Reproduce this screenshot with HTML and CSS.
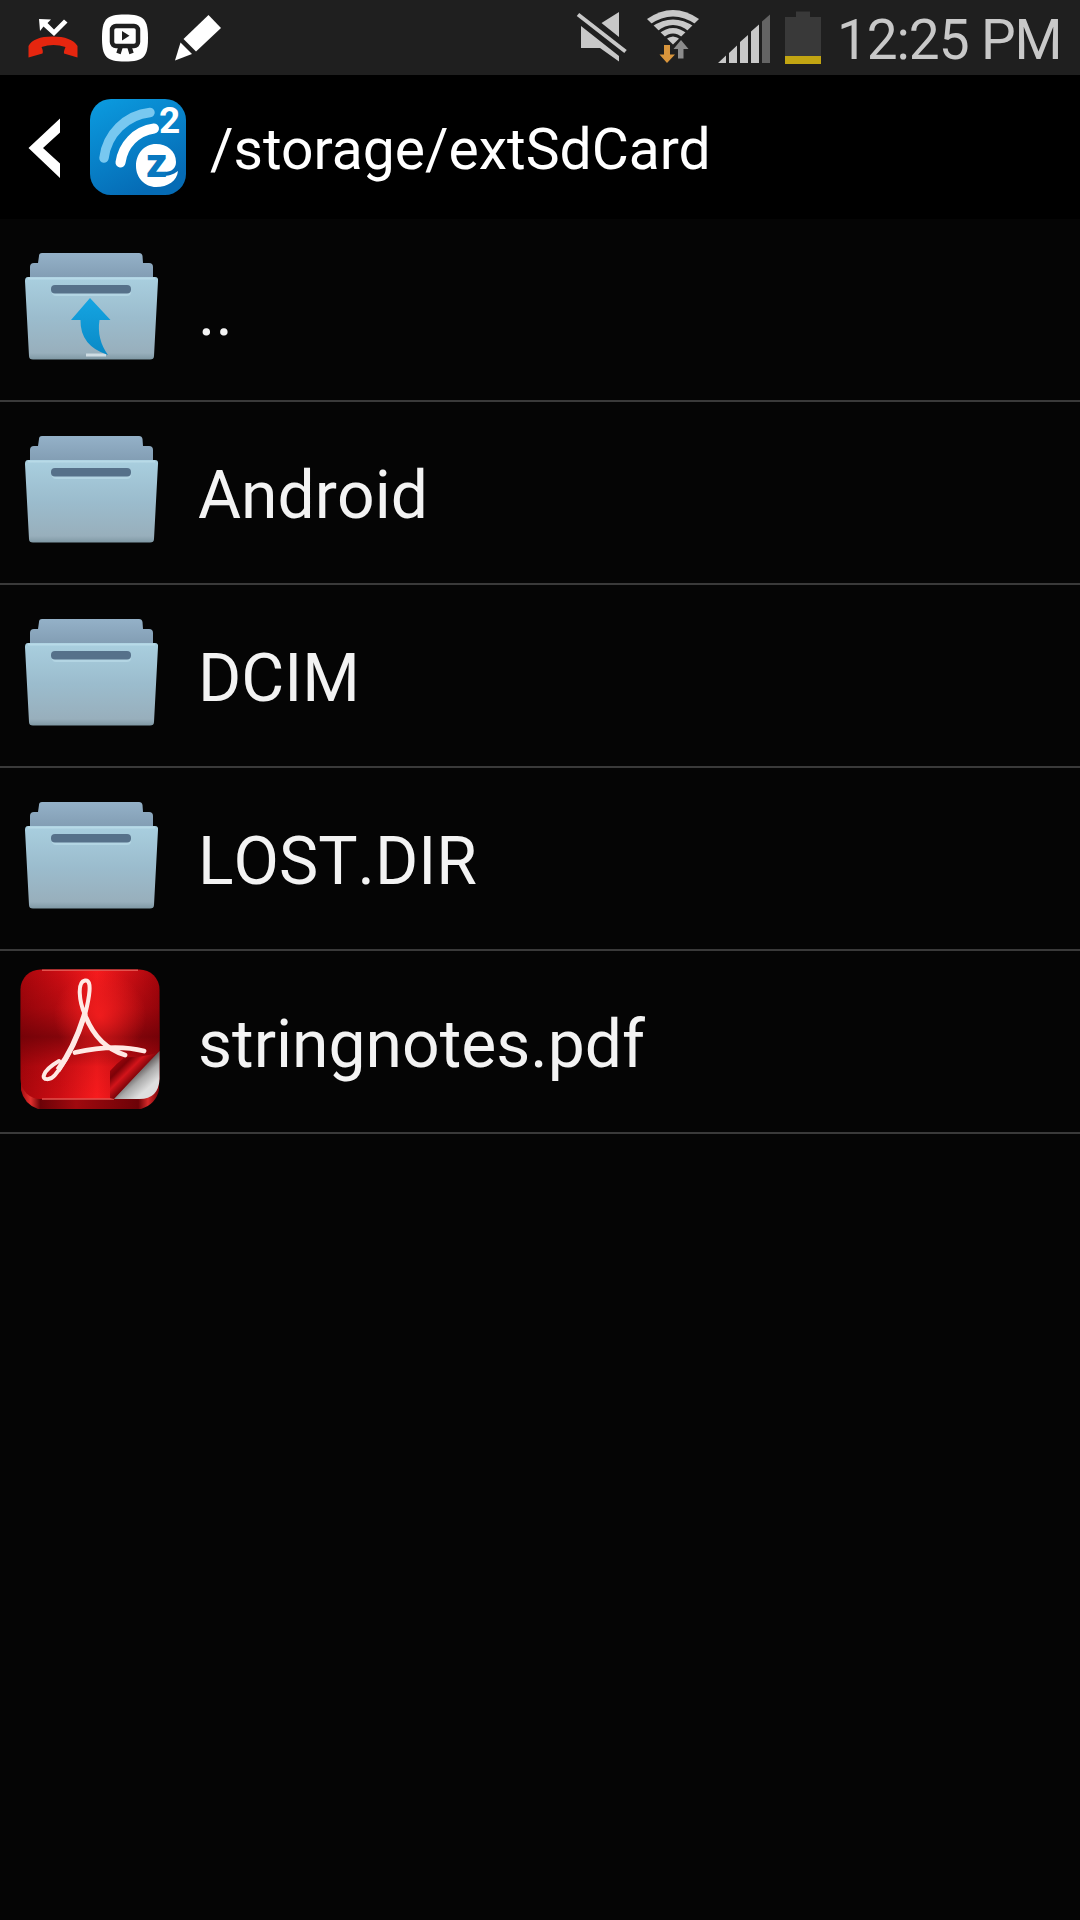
FILE: index.html
```html
<!DOCTYPE html>
<html lang="en">
<head>
    <meta charset="UTF-8">
    <meta name="viewport" content="width=device-width, initial-scale=1.0">
    <title>File Browser</title>
    <link rel="stylesheet" href="styles.css">
</head>
<body>

<!-- Shared gradients and the folder shape -->
<svg class="defs" width="0" height="0">
    <defs>
        <linearGradient id="folderBack" x1="0" y1="0" x2="0" y2="1">
            <stop offset="0" stop-color="#94b1c8"/>
            <stop offset="1" stop-color="#809bb1"/>
        </linearGradient>
        <linearGradient id="folderFront" x1="0" y1="0" x2="0" y2="1">
            <stop offset="0" stop-color="#a9cfdf"/>
            <stop offset="0.5" stop-color="#9bbccd"/>
            <stop offset="0.92" stop-color="#98afbc"/>
            <stop offset="1" stop-color="#7f98a4"/>
        </linearGradient>
        <linearGradient id="arrow" x1="0" y1="0" x2="0" y2="1">
            <stop offset="0" stop-color="#15a5e2"/>
            <stop offset="1" stop-color="#0989c6"/>
        </linearGradient>
        <linearGradient id="logoBg" x1="0" y1="0" x2="0.5" y2="1">
            <stop offset="0" stop-color="#0b9ce0"/>
            <stop offset="1" stop-color="#056bb5"/>
        </linearGradient>
        <linearGradient id="pdfBg" x1="0" y1="0" x2="1" y2="0">
            <stop offset="0" stop-color="#a8060c"/>
            <stop offset="0.28" stop-color="#cc0d13"/>
            <stop offset="0.55" stop-color="#f81b1d"/>
            <stop offset="0.75" stop-color="#d31015"/>
            <stop offset="1" stop-color="#a5050c"/>
        </linearGradient>
        <linearGradient id="pdfShade" x1="0" y1="0" x2="0" y2="1">
            <stop offset="0" stop-color="#5b0006" stop-opacity="0"/>
            <stop offset="0.3" stop-color="#5b0006" stop-opacity="0.25"/>
            <stop offset="0.52" stop-color="#5b0006" stop-opacity="0.65"/>
            <stop offset="0.75" stop-color="#5b0006" stop-opacity="0.1"/>
            <stop offset="1" stop-color="#5b0006" stop-opacity="0"/>
        </linearGradient>
        <radialGradient id="pdfGlow" gradientUnits="userSpaceOnUse" cx="100" cy="65" r="46">
            <stop offset="0" stop-color="#ff2020" stop-opacity="0.75"/>
            <stop offset="1" stop-color="#ff2020" stop-opacity="0"/>
        </radialGradient>
        <linearGradient id="pdfEdge" x1="0" y1="0" x2="1" y2="0">
            <stop offset="0" stop-color="#a50c10"/>
            <stop offset="0.07" stop-color="#e2302e"/>
            <stop offset="0.14" stop-color="#6c0207"/>
            <stop offset="0.4" stop-color="#a0090e"/>
            <stop offset="0.85" stop-color="#6c0207"/>
            <stop offset="0.92" stop-color="#d62a2a"/>
            <stop offset="1" stop-color="#7c0208"/>
        </linearGradient>
        <linearGradient id="paper" gradientUnits="userSpaceOnUse" x1="132" y1="121" x2="147" y2="138">
            <stop offset="0" stop-color="#4d4444"/>
            <stop offset="0.5" stop-color="#aaa"/>
            <stop offset="1" stop-color="#dedede"/>
        </linearGradient>
        <linearGradient id="curl" gradientUnits="userSpaceOnUse" x1="112" y1="108" x2="134" y2="130">
            <stop offset="0" stop-color="#b5080e"/>
            <stop offset="0.4" stop-color="#7d0208"/>
            <stop offset="0.65" stop-color="#d3141a"/>
            <stop offset="1" stop-color="#6b0106"/>
        </linearGradient>
        <symbol id="folder" viewBox="0 0 180 181">
            <path d="M42 34h97q3 0 3.500 3l0.500 7h6q4 0 4 4v14H30V48q0-4 4-4h4l1-7q0-3 3-3z" fill="url(#folderBack)"/>
            <path d="M28 58h127q3.500 0 3 4l-4 75q0 3.500-4 3.500H33q-4 0-4-3.500l-4-75q0-4 3-4z" fill="url(#folderFront)"/>
            <path d="M28 59.500h127" stroke="#b8dae7" stroke-width="2"/>
            <rect x="52" y="69" width="79" height="8" rx="4" fill="#b3d5e3"/>
            <rect x="51" y="66" width="80" height="8.500" rx="4" fill="#56718a"/>
        </symbol>
    </defs>
</svg>

<div class="status-bar">
    <svg class="status-left" width="240" height="75" viewBox="0 0 240 75">
        <!-- missed call -->
        <path d="M28.500 57.500V46q5-9.500 24-9.500t25 9.500v11.500L64 53.500q-0.500-2 1.500-6.500-12-4-24 0 2 4 1 6.500z" fill="#e5260f"/>
        <path d="M39 19l12 .5-3.500 3.500 6.500 6.500L64 19.500l3.500 3L54 36 43.500 26.500 40 31z" fill="#fff"/>
        <!-- screen share -->
        <path d="M125 14.500c19 0 23 5 23 23.500s-4 23.500-23 23.500-23-5-23-23.500 4-23.500 23-23.500z" fill="#fff"/>
        <rect x="112" y="26" width="26" height="20" rx="4" fill="none" stroke="#1f1f1f" stroke-width="4.500"/>
        <path d="M122 31v9.500l7.500-4.700z" fill="#1f1f1f"/>
        <path d="M120.500 47l-2 6.500M129.500 47l2 6.500" stroke="#1f1f1f" stroke-width="4.500"/>
        <!-- pencil -->
        <path d="M208.500 15L221 28l-25 23.500L183.500 39z" fill="#fff"/>
        <path d="M180.500 42.500L192 54l-17 6.500z" fill="#fff"/>
    </svg>
    <svg class="status-right" width="262" height="75" viewBox="560 0 262 75">
        <!-- muted speaker -->
        <path d="M578 14.500l47.500 37" stroke="#c8c8c8" stroke-width="4"/>
        <path d="M619 12v25l-17.500-14zM581 26l38 30v5.500L600 48h-19z" fill="#c8c8c8"/>
        <!-- wifi -->
        <path d="M647 19q26-18 52 0l-26 25.500z" fill="#c8c8c8"/>
        <path d="M651 25.500q22-15 44 0M658 32.500q15-12 30 0M664 39q9-8 18 0" fill="none" stroke="#1f1f1f" stroke-width="2.800"/>
        <path d="M664 45h6v9.500h5L667 63l-7.500-8.500h4.500z" fill="#d8953c"/>
        <path d="M681 40l7.500 9H683.500v9.500h-5.500V49h-4.500z" fill="#8b8b8b"/>
        <!-- signal -->
        <path d="M718 63l8-7.500V63zM729 53l8-7.500V63h-8zM740 42l8-7V63h-8zM751 31.500l8-7V63h-8z" fill="#c8c8c8"/>
        <path d="M762 21.500l8-7V63h-8z" fill="#646464"/>
        <!-- battery -->
        <path d="M785 17h11V11.500h14V17h11v39h-36z" fill="#393939"/>
        <path d="M785 56h36v8h-36z" fill="#c2a512"/>
    </svg>
    <span class="clock">12:25 PM</span>
</div>

<div class="header">
    <svg class="back" width="90" height="143" viewBox="0 75 90 143">
        <path d="M60 117.500v14L43 147l17 15.500V177L28.500 147z" fill="#fff"/>
    </svg>
    <svg class="logo" width="96" height="96" viewBox="0 0 96 96">
        <rect width="96" height="96" rx="21" fill="url(#logoBg)"/>
        <path d="M14 59C17 35 36 16 60 13.500" fill="none" stroke="#78c8f0" stroke-width="9.500" stroke-linecap="round"/>
        <path d="M30.500 63.500C33 46 46 32 64 29.500" fill="none" stroke="#fff" stroke-width="10" stroke-linecap="round"/>
        <text class="logo-two" x="69" y="34">2</text>
        <path d="M66 45C54 45 46 55 46 67c0 12 9 21 20 21 12 0 21-6 22-16-5 4-10 5-16 5l2-4c8 0 12-4 12-10C86 52 77 45 66 45z" fill="#fff"/>
        <text class="logo-z" x="56" y="78">z</text>
    </svg>
    <span class="path">/storage/extSdCard</span>
</div>

<div class="file-list">
    <div class="row">
        <svg class="icon" viewBox="0 0 180 181">
            <use href="#folder"/>
            <path d="M86 136h20" stroke="#cfdde4" stroke-width="3"/>
            <path d="M90 79l20.500 22H99.500q-3 19 8.500 35Q80 127 80.500 101H71z" fill="url(#arrow)"/>
        </svg>
        <span class="name">..</span>
    </div>
    <div class="row">
        <svg class="icon" viewBox="0 0 180 181"><use href="#folder"/></svg>
        <span class="name">Android</span>
    </div>
    <div class="row">
        <svg class="icon" viewBox="0 0 180 181"><use href="#folder"/></svg>
        <span class="name">DCIM</span>
    </div>
    <div class="row">
        <svg class="icon" viewBox="0 0 180 181"><use href="#folder"/></svg>
        <span class="name">LOST.DIR</span>
    </div>
    <div class="row">
        <svg class="icon" viewBox="0 0 180 181">
            <path d="M21 125h138v14q-3 14-18 19H38q-14-5-17-19z" fill="url(#pdfEdge)"/>
            <rect x="20.500" y="18.500" width="139" height="129.500" rx="20" fill="url(#pdfBg)"/>
            <rect x="20.500" y="18.500" width="139" height="129.500" rx="20" fill="url(#pdfShade)"/>
            <rect x="20.500" y="18.500" width="139" height="129.500" rx="20" fill="url(#pdfGlow)"/>
            <path d="M42 19.200h96M42 148h72" stroke="#e2524e" stroke-width="1.400"/>
            <path d="M159.500 100v28q-1 20-20 20H113z" fill="url(#paper)"/>
            <path d="M157 102q-17 5-32 4-8 6-15 14v27l4 1z" fill="url(#curl)"/>
            <!-- ribbon -->
            <path d="M85 64C79 50 77 31 85 29.500s4 18 0 34.500c-8 24-20 48-30 60-5 6-13 5-11 0 2-6 8-10 15-14" fill="none" stroke="#ffe9e4" stroke-width="4" stroke-linecap="round"/>
            <path d="M85 62c-6 20-16 42-27 57" fill="none" stroke="#ffe9e4" stroke-width="5.500"/>
            <path d="M85 64c7 18 20 34 40 40M75 101.500c22-5 48-7 69-1.500" fill="none" stroke="#ffe9e4" stroke-width="4.800" stroke-linecap="round"/>
        </svg>
        <span class="name">stringnotes.pdf</span>
    </div>
</div>

</body>
</html>
```

FILE: styles.css
```css
* {
    box-sizing: border-box;
}
body {
    margin: 0;
    padding: 0;
    min-height: 1920px;
    font-family: Roboto, sans-serif;
    color: #f3f3f3;
    background-color: #050505;
    overflow: hidden;
}
svg {
    display: block;
    flex-shrink: 0;
}
.defs {
    height: 0;
}
.status-bar {
    display: flex;
    align-items: center;
    height: 75px;
    background-color: #1f1f1f;
}
.status-right {
    margin-left: auto;
}
.clock {
    width: 258px;
    padding: 5px 0 0 15px;
    font-size: 55px;
    letter-spacing: -1.1px;
    color: #c8c8c8;
    white-space: nowrap;
}
.header {
    display: flex;
    align-items: center;
    height: 144px;
    background-color: #000;
}
.logo-two {
    font-size: 37px;
    font-weight: 700;
    fill: #fff;
}
.logo-z {
    font-size: 41px;
    font-weight: 900;
    fill: #0878c0;
}
.path {
    margin-left: 24px;
    padding-top: 5px;
    font-size: 57px;
    color: #fff;
    white-space: nowrap;
}
.row {
    display: flex;
    align-items: center;
    height: 183px;
    border-bottom: 2px solid #3a3a3a;
}
.icon {
    width: 180px;
    height: 181px;
}
.name {
    margin-left: 18px;
    padding-top: 6px;
    font-size: 66px;
    font-kerning: none;
    white-space: nowrap;
}
```
